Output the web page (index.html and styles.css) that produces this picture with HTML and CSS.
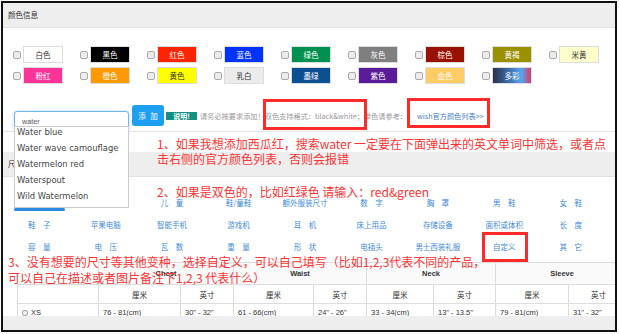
FILE: index.html
```html
<!DOCTYPE html>
<html lang="zh-CN">
<head>
    <meta charset="UTF-8">
    <meta name="viewport" content="width=device-width, initial-scale=1.0">
    <title>颜色信息</title>
    <link rel="stylesheet" href="styles.css">
</head>
<body>
    <div class="frame">
        <div class="panel-heading">颜色信息</div>
        <div class="color-grid">
            <div class="color-item"><span class="chk"></span><span class="swatch c-white">白色</span></div>
            <div class="color-item"><span class="chk"></span><span class="swatch c-black">黑色</span></div>
            <div class="color-item"><span class="chk"></span><span class="swatch c-red">红色</span></div>
            <div class="color-item"><span class="chk"></span><span class="swatch c-blue">蓝色</span></div>
            <div class="color-item"><span class="chk"></span><span class="swatch c-green">绿色</span></div>
            <div class="color-item"><span class="chk"></span><span class="swatch c-grey">灰色</span></div>
            <div class="color-item"><span class="chk"></span><span class="swatch c-brown">棕色</span></div>
            <div class="color-item"><span class="chk"></span><span class="swatch c-khaki">黄褐</span></div>
            <div class="color-item"><span class="chk"></span><span class="swatch c-beige">米黄</span></div>
            <div class="color-item"><span class="chk"></span><span class="swatch c-pink">粉红</span></div>
            <div class="color-item"><span class="chk"></span><span class="swatch c-orange">橙色</span></div>
            <div class="color-item"><span class="chk"></span><span class="swatch c-yellow">黄色</span></div>
            <div class="color-item"><span class="chk"></span><span class="swatch c-ivory">乳白</span></div>
            <div class="color-item"><span class="chk"></span><span class="swatch c-navy">墨绿</span></div>
            <div class="color-item"><span class="chk"></span><span class="swatch c-purple">紫色</span></div>
            <div class="color-item"><span class="chk"></span><span class="swatch c-gold">金色</span></div>
            <div class="color-item"><span class="chk"></span><span class="swatch c-multi">多彩</span></div>
        </div>

        <div class="add-row">
            <div class="search">
                <input class="search-input" type="text" value="water">
                <ul class="suggest">
                    <li>Water blue</li>
                    <li>Water wave camouflage</li>
                    <li>Watermelon red</li>
                    <li>Waterspout</li>
                    <li>Wild Watermelon</li>
                </ul>
            </div>
            <button class="btn-add">添 加</button>
            <span class="tag">说明!</span>
            <span class="hint">请务必按要求添加！双色支持格式：black&amp;white；单色请参考：</span>
            <a class="hint-link" href="#">wish官方颜色列表&gt;&gt;</a>
        </div>

        <div class="panel-heading size-heading">尺码信息</div>
        <div class="size-grid">
            <span></span><span></span><span>儿　童</span><span>鞋/童鞋</span><span>额外服装尺寸</span><span>数　字</span><span>胸　罩</span><span>男　鞋</span><span>女　鞋</span>
            <span>鞋　子</span><span>苹果电脑</span><span>智能手机</span><span>游戏机</span><span>耳　机</span><span>床上用品</span><span>存储设备</span><span>面积或体积</span><span>长　度</span>
            <span>容　量</span><span>电　压</span><span>瓦　数</span><span>重　量</span><span>形　状</span><span>电插头</span><span>男士西装礼服</span><span>自定义</span><span>其　它</span>
        </div>

        <div class="table-wrap">
            <table class="size-table">
                <colgroup>
                    <col class="w81"><col class="w82"><col class="w53"><col class="w80"><col class="w53"><col class="w67"><col class="w62"><col class="w73"><col class="w60">
                </colgroup>
                <tr class="head-row">
                    <th class="corner"></th>
                    <th colspan="2">Chest</th>
                    <th colspan="2">Waist</th>
                    <th colspan="2">Neck</th>
                    <th colspan="2">Sleeve</th>
                </tr>
                <tr class="unit-row">
                    <th></th>
                    <th>厘米</th><th>英寸</th>
                    <th>厘米</th><th>英寸</th>
                    <th>厘米</th><th>英寸</th>
                    <th>厘米</th><th>英寸</th>
                </tr>
                <tr>
                    <td><span class="chk chk-sm"></span>XS</td>
                    <td>76 - 81(cm)</td><td>30" - 32"</td>
                    <td>61 - 66(cm)</td><td>24" - 26"</td>
                    <td>33 - 34(cm)</td><td>13" - 13.5"</td>
                    <td>79 - 81(cm)</td><td>31" - 32"</td>
                </tr>
            </table>
        </div>
        <div class="table-foot"></div>

        <div class="note note-1">1、如果我想添加西瓜红，搜索water 一定要在下面弹出来的英文单词中筛选，或者点<br>击右侧的官方颜色列表，否则会报错</div>
        <div class="note note-2">2、如果是双色的，比如红绿色 请输入：red&amp;green</div>
        <div class="note note-3">3、没有想要的尺寸等其他变种，选择自定义，可以自己填写（比如1,2,3代表不同的产品，<br>可以自己在描述或者图片备注下1,2,3 代表什么）</div>
        <div class="mark mark-1"></div>
        <div class="mark mark-2"></div>
        <div class="mark mark-3"></div>
    </div>
</body>
</html>
```

FILE: styles.css
```css
body {
    margin: 0;
    font-family: "Noto Sans CJK SC", sans-serif;
    color: #333;
    background: #fff;
}
.frame {
    position: relative;
    width: 612px;
    height: 327px;
    margin: 1px 0 0 1px;
    border: 2px solid #111;
    overflow: hidden;
}
.panel-heading {
    height: 24px;
    line-height: 24px;
    padding-left: 5px;
    background: #eee;
    border-bottom: 1px solid #e2e2e2;
    font-size: 7.5px;
    color: #333;
}
.size-heading {
    margin-top: 20px;
}

/* colour swatches */
.color-grid {
    display: grid;
    grid-template-columns: repeat(9, 67px);
    row-gap: 4px;
    padding: 18px 0 12px 10px;
}
.color-item {
    display: flex;
    align-items: center;
}
.chk {
    display: inline-block;
    width: 8px;
    height: 8px;
    box-sizing: border-box;
    border: 1px solid #aaa;
    border-radius: 2px;
    background: #ececec;
    margin-right: 2px;
}
.swatch {
    width: 40px;
    height: 17px;
    box-sizing: border-box;
    border: 1px solid #ddd;
    line-height: 15px;
    text-align: center;
    font-size: 7.5px;
    color: #fff;
}
.c-white { background: #fff; color: #333; }
.c-black { background: #000; }
.c-red { background: #ff2400; }
.c-blue { background: #0033ff; }
.c-green { background: #00904f; }
.c-grey { background: #7f7f7f; }
.c-brown { background: #991100; }
.c-khaki { background: #9a9000; }
.c-beige { background: #ffffcc; color: #333; }
.c-pink { background: #fe3398; }
.c-orange { background: #ff9900; }
.c-yellow { background: #ffff00; color: #333; }
.c-ivory { background: #ececec; color: #333; }
.c-navy { background: #0d5091; }
.c-purple { background: #5b1b98; }
.c-gold { background: #ffcc66; }
.c-multi { background: linear-gradient(90deg, #2d3148 0%, #3b6aa8 40%, #55a6f0 75%, #c04a78 96%); }

/* add colour row */
.add-row {
    display: flex;
    align-items: center;
    padding: 9px 0 5px 11px;
    border-bottom: 1px solid #e6e6e6;
}
.search {
    position: relative;
    width: 115px;
    height: 21px;
}
.search-input {
    width: 100%;
    height: 21px;
    box-sizing: border-box;
    border: 1px solid #74b4ec;
    border-radius: 3px;
    padding: 0 0 0 7px;
    font: 7.2px "Liberation Sans", sans-serif;
    color: #555;
    box-shadow: 0 0 3px rgba(102, 175, 233, 0.5);
    outline: none;
}
.suggest {
    position: absolute;
    top: 21px;
    left: 0;
    width: 115px;
    margin: 0;
    padding: 0;
    list-style: none;
    background: #fff;
    border: 1px solid #ccc;
    box-sizing: border-box;
    z-index: 2;
}
.suggest li {
    height: 16px;
    line-height: 16px;
    padding-left: 2px;
    font: 8.4px "DejaVu Sans", sans-serif;
    color: #444;
    white-space: nowrap;
}
.suggest::after {
    content: "";
    position: absolute;
    left: -1px;
    bottom: -4px;
    width: 51px;
    height: 3px;
    border-radius: 2px;
    background: #2b8be3;
}
.btn-add {
    margin-left: 3px;
    width: 32px;
    height: 21px;
    padding: 0;
    border: none;
    border-radius: 3px;
    background: #1c9ef1;
    color: #fff;
    font-family: inherit;
    font-size: 7.5px;
    word-spacing: 3px;
}
.tag {
    margin-left: 2px;
    width: 31px;
    height: 8px;
    line-height: 8px;
    background: #159080;
    color: #fff;
    font-size: 7px;
    font-weight: bold;
    text-align: center;
}
.hint {
    margin-left: 3px;
    font-size: 7.2px;
    color: #999;
    white-space: nowrap;
}
.hint-link {
    margin-left: 10px;
    font-size: 7.2px;
    color: #4a80c4;
    text-decoration: none;
    white-space: nowrap;
}

/* size categories */
.size-grid {
    display: grid;
    grid-template-columns: repeat(9, 1fr);
    grid-auto-rows: 22px;
    padding: 15px 11px 4px 3px;
}
.size-grid span {
    line-height: 22px;
    text-align: center;
    font-size: 7.5px;
    color: #3f8ad6;
    white-space: nowrap;
}

/* size table */
.table-wrap {
    height: 54px;
    margin-left: 14px;
    overflow: hidden;
}
.size-table {
    width: 611px;
    table-layout: fixed;
    border-collapse: collapse;
    font: 7.5px "Liberation Sans", sans-serif;
    color: #333;
}
.w81 { width: 81px; }
.w82 { width: 82px; }
.w53 { width: 53px; }
.w80 { width: 80px; }
.w67 { width: 67px; }
.w62 { width: 62px; }
.w73 { width: 73px; }
.w60 { width: 60px; }
.size-table th,
.size-table td {
    border: 1px solid #ddd;
    padding: 0 4px;
    white-space: nowrap;
    overflow: hidden;
}
.head-row th {
    height: 21px;
    background: #fafafa;
    font-weight: bold;
    text-align: center;
}
.head-row .corner {
    border-top: none;
    border-left: none;
    background: #fff;
}
.unit-row th {
    height: 18px;
    font-family: "Noto Sans CJK SC", sans-serif;
    font-weight: normal;
    text-align: center;
}
.size-table td {
    height: 24px;
    vertical-align: top;
    padding-top: 4px;
    line-height: 9px;
}
.chk-sm {
    width: 6px;
    height: 6px;
    margin-right: 3px;
    vertical-align: -1px;
}
.table-foot {
    height: 14px;
    background: #eee;
}

/* annotations drawn over the screenshot */
.note {
    position: absolute;
    font-size: 12px;
    line-height: 15px;
    color: #ff3333;
    white-space: nowrap;
    z-index: 3;
}
.note-1 { left: 154px; top: 133px; }
.note-2 { left: 154px; top: 181px; }
.note-3 { left: 5px; top: 251px; line-height: 16px; }
.mark {
    position: absolute;
    box-sizing: border-box;
    border: 3px solid #ff2a2a;
    z-index: 3;
}
.mark-1 { left: 260px; top: 96px; width: 104px; height: 31px; }
.mark-2 { left: 404px; top: 95px; width: 83px; height: 30px; }
.mark-3 { left: 479px; top: 229px; width: 46px; height: 30px; }
```
